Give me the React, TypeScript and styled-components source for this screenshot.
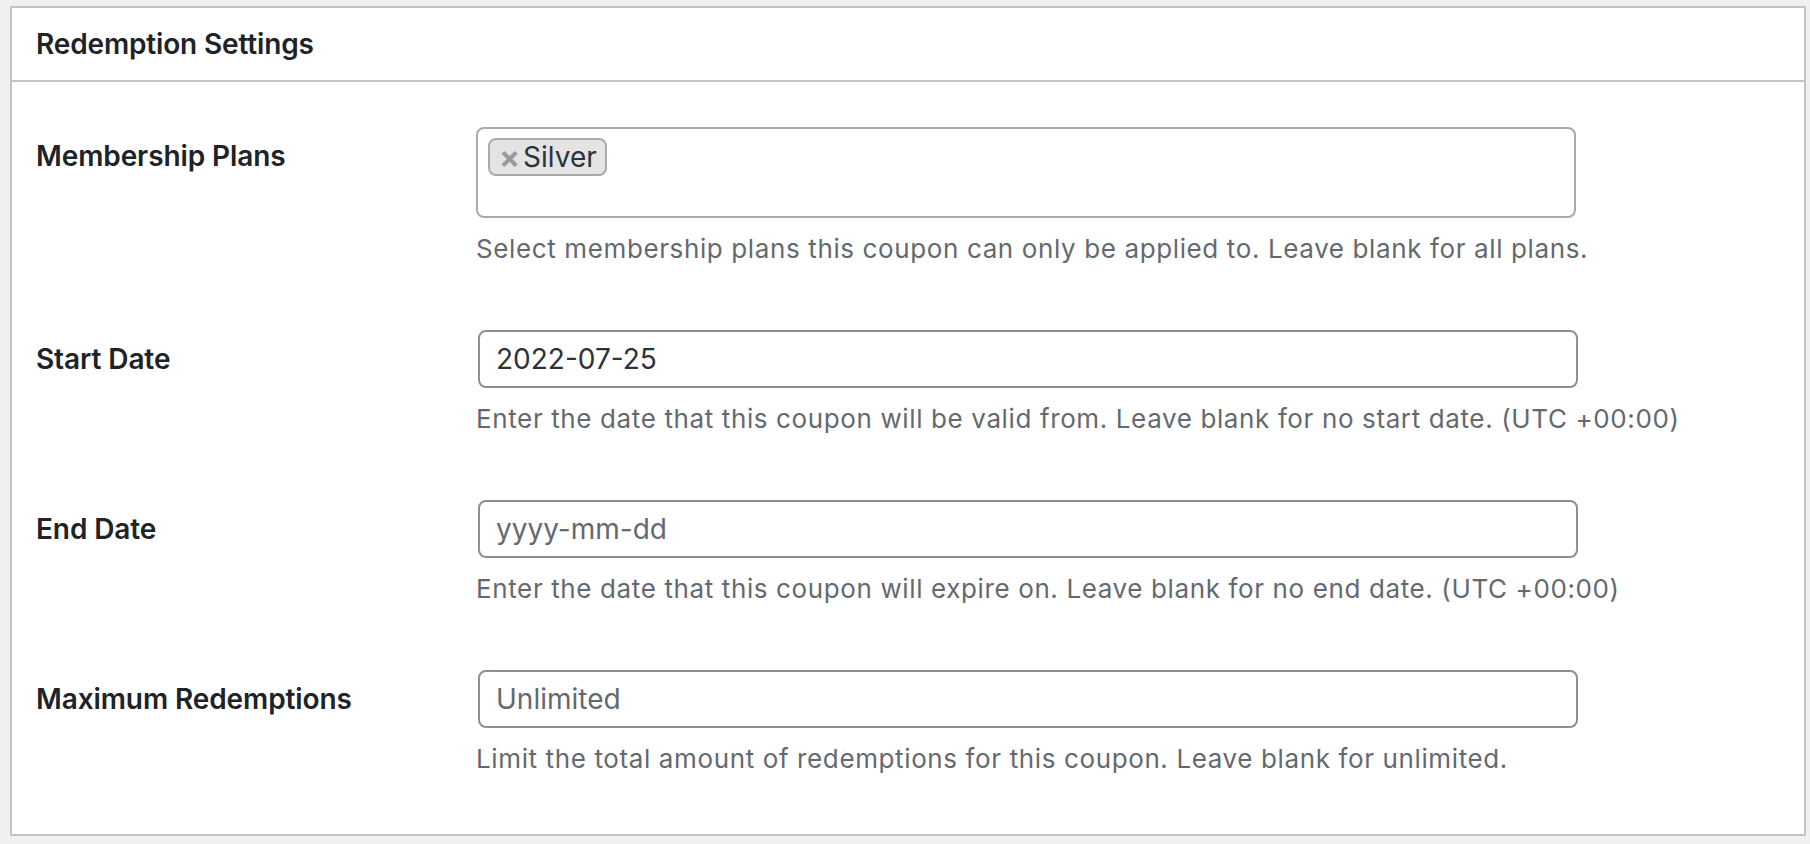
import React from "react";
import styled, { createGlobalStyle } from "styled-components";

const Global = createGlobalStyle`
  html, body {
    margin: 0;
    padding: 0;
    background: #f0f0f1;
  }
  body {
    font-family: Inter, "Noto Sans", "Liberation Sans", sans-serif;
    color: #1d2327;
    -webkit-font-smoothing: antialiased;
  }
  * { box-sizing: border-box; }
`;

const Page = styled.div`
  padding: 6px 4px 8px 10px;
`;

const Card = styled.section`
  background: #fff;
  border: 2px solid #c3c4c7;
`;

const CardHeader = styled.div`
  height: 74px;
  border-bottom: 2px solid #c3c4c7;
  display: flex;
  align-items: center;
  padding: 0 24px;
`;

const CardTitle = styled.h2`
  margin: 0;
  font-size: 28px;
  font-weight: 600;
  line-height: 38px;
  letter-spacing: -0.15px;
  color: #1d2327;
`;

const Inside = styled.div`
  padding: 15px 24px 24px;
`;

const Row = styled.div`
  display: flex;
  align-items: flex-start;
`;

const Label = styled.label`
  flex: 0 0 420px;
  padding: 40px 20px 40px 0;
  font-size: 28px;
  font-weight: 600;
  line-height: 38px;
  letter-spacing: -0.1px;
  color: #1d2327;
`;

const Field = styled.div`
  flex: 1;
  padding: 30px 20px;
`;

const MultiSelect = styled.div`
  width: 1100px;
  height: 91px;
  border: 2px solid #aaa;
  border-radius: 8px;
  background: #fff;
  padding: 9px 10px;
  display: flex;
  align-items: flex-start;
`;

const Choice = styled.span`
  display: inline-flex;
  align-items: center;
  height: 38px;
  padding: 0 8px 0 9px;
  background: #e4e4e4;
  border: 2px solid #aaa;
  border-radius: 8px;
  font-size: 28px;
  line-height: 34px;
  color: #2c3338;
`;

const Remove = styled.span`
  font-size: 31px;
  font-weight: 700;
  color: #999;
  margin-right: 3px;
  line-height: 1;
  position: relative;
  top: -1px;
`;

const TextInput = styled.input`
  display: block;
  width: 1100px;
  height: 58px;
  margin-left: 2px;
  padding: 0 16px;
  border: 2px solid #8c8f94;
  border-radius: 8px;
  background: #fff;
  font-family: inherit;
  font-size: 28px;
  color: #2c3338;
  outline: none;
  &::placeholder {
    color: #646970;
    opacity: 1;
  }
`;

const Description = styled.p`
  margin: 10px 0 0;
  font-size: 26px;
  line-height: 42px;
  letter-spacing: 0.62px;
  color: #646970;
`;

type FieldDef = {
  label: string;
  value?: string;
  placeholder?: string;
  desc: string;
};

const fields: FieldDef[] = [
  {
    label: "Start Date",
    value: "2022-07-25",
    desc: "Enter the date that this coupon will be valid from. Leave blank for no start date. (UTC +00:00)",
  },
  {
    label: "End Date",
    placeholder: "yyyy-mm-dd",
    desc: "Enter the date that this coupon will expire on. Leave blank for no end date. (UTC +00:00)",
  },
  {
    label: "Maximum Redemptions",
    placeholder: "Unlimited",
    desc: "Limit the total amount of redemptions for this coupon. Leave blank for unlimited.",
  },
];

export default function App() {
  return (
    <>
      <Global />
      <Page>
        <Card>
          <CardHeader>
            <CardTitle>Redemption Settings</CardTitle>
          </CardHeader>
          <Inside>
            <Row>
              <Label>Membership Plans</Label>
              <Field>
                <MultiSelect>
                  <Choice>
                    <Remove>×</Remove>
                    Silver
                  </Choice>
                </MultiSelect>
                <Description>
                  Select membership plans this coupon can only be applied to. Leave blank for all plans.
                </Description>
              </Field>
            </Row>
            {fields.map((f) => (
              <Row key={f.label}>
                <Label>{f.label}</Label>
                <Field>
                  <TextInput
                    type="text"
                    defaultValue={f.value}
                    placeholder={f.placeholder}
                  />
                  <Description>{f.desc}</Description>
                </Field>
              </Row>
            ))}
          </Inside>
        </Card>
      </Page>
    </>
  );
}
